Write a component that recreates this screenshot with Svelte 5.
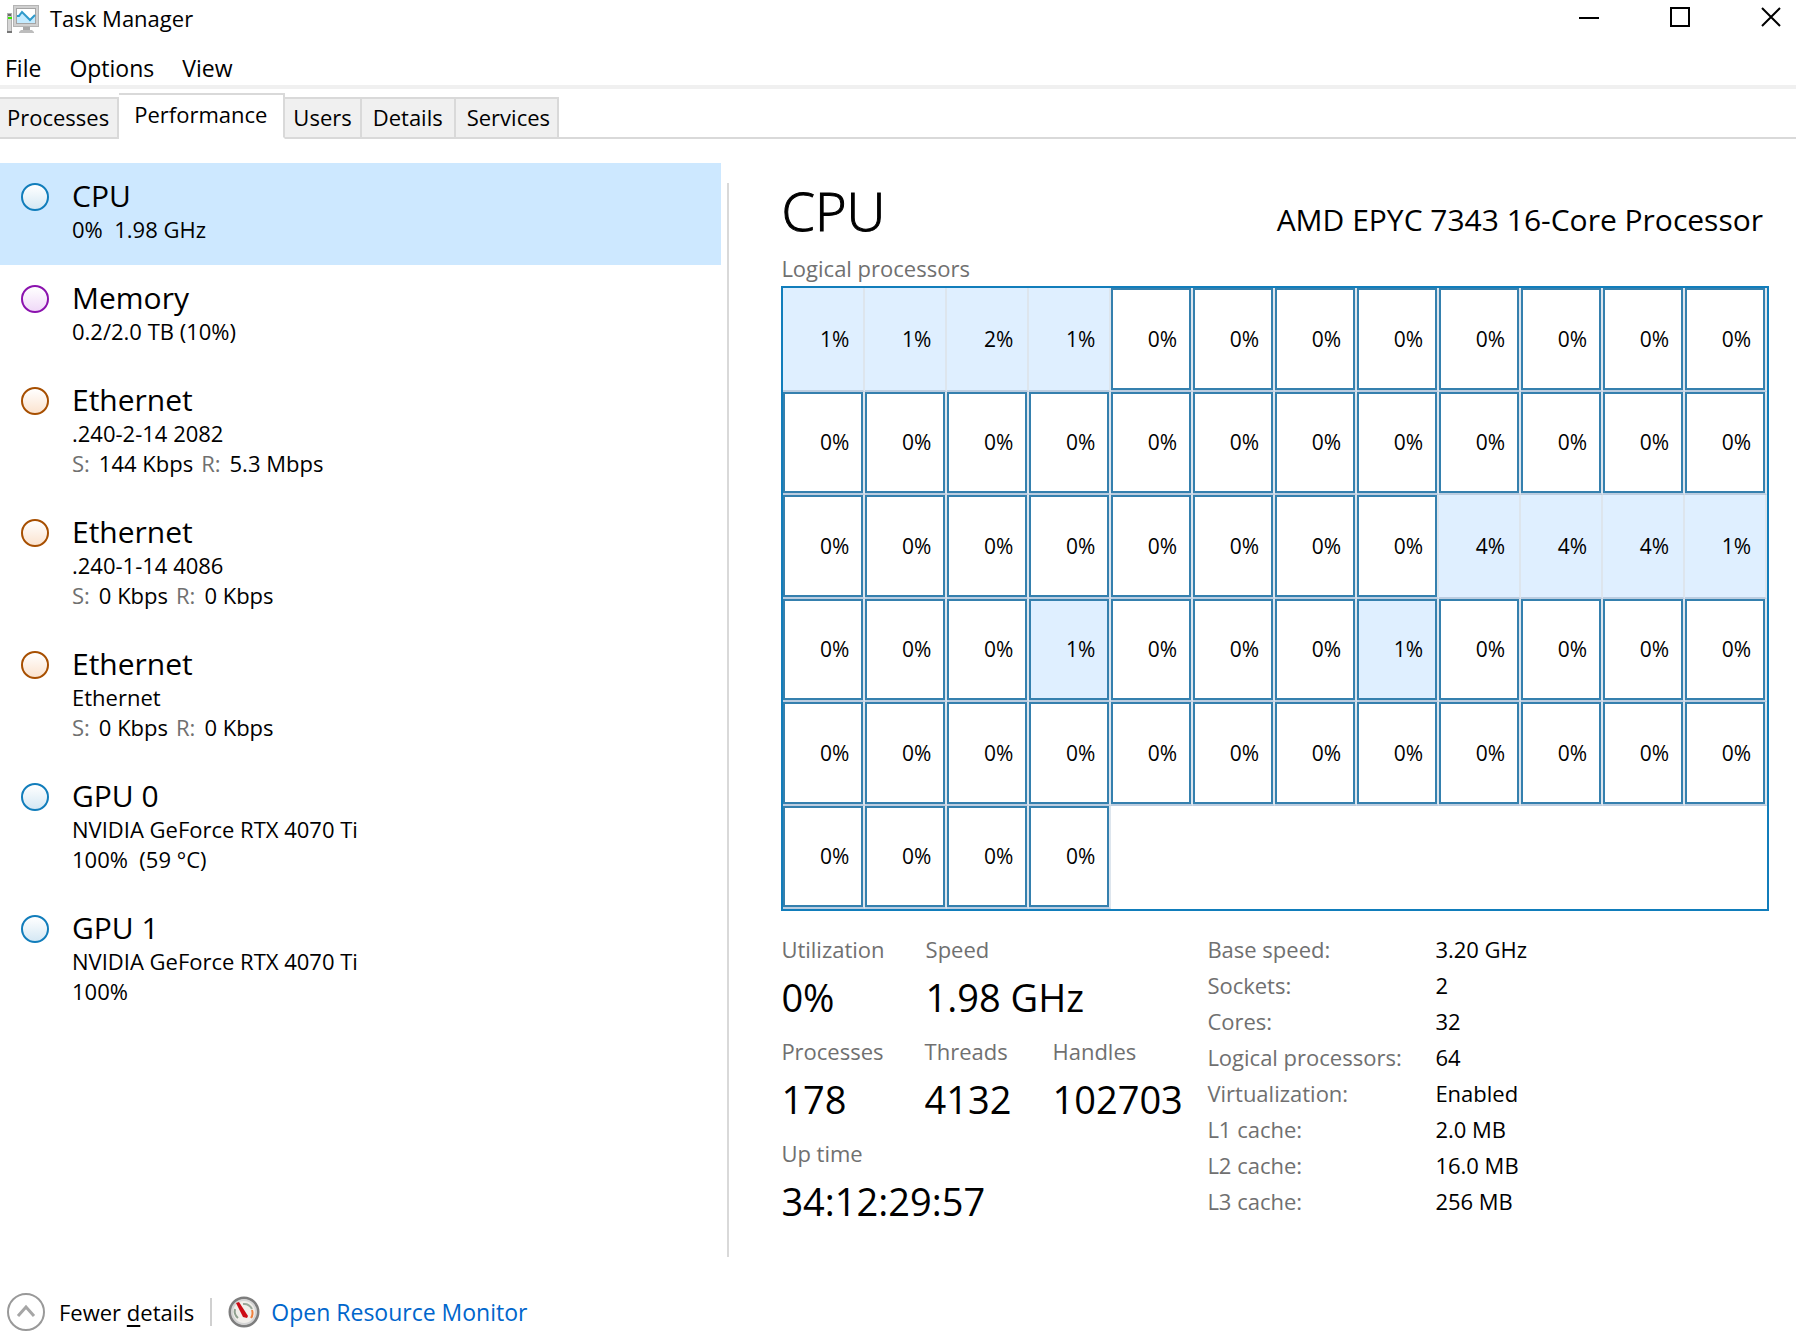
<script>
  const tabs = ['Processes', 'Performance', 'Users', 'Details', 'Services'];
  let activeTab = $state('Performance');
  let selected = $state(0);

  const devices = [
    { name: 'CPU', tone: 'blue', lines: ['0%  1.98 GHz'] },
    { name: 'Memory', tone: 'purple', lines: ['0.2/2.0 TB (10%)'] },
    { name: 'Ethernet', tone: 'orange', lines: ['.240-2-14 2082'], send: '144 Kbps', receive: '5.3 Mbps' },
    { name: 'Ethernet', tone: 'orange', lines: ['.240-1-14 4086'], send: '0 Kbps', receive: '0 Kbps' },
    { name: 'Ethernet', tone: 'orange', lines: ['Ethernet'], send: '0 Kbps', receive: '0 Kbps' },
    { name: 'GPU 0', tone: 'blue', lines: ['NVIDIA GeForce RTX 4070 Ti', '100%  (59 °C)'] },
    { name: 'GPU 1', tone: 'blue', lines: ['NVIDIA GeForce RTX 4070 Ti', '100%'] }
  ];

  // Load of each busy logical processor; all others are idle.
  const load = { 0: 1, 1: 1, 2: 2, 3: 1, 32: 4, 33: 4, 34: 4, 35: 1, 39: 1, 43: 1 };
  const framed = [39, 43];
  const cores = Array.from({ length: 64 }, (_, i) => ({
    value: load[i] ?? 0,
    busy: i in load,
    framed: !(i in load) || framed.includes(i)
  }));

  const stats = [
    [['Utilization', '0%'], ['Speed', '1.98 GHz']],
    [['Processes', '178'], ['Threads', '4132'], ['Handles', '102703']],
    [['Up time', '34:12:29:57']]
  ];

  const specs = [
    ['Base speed:', '3.20 GHz'],
    ['Sockets:', '2'],
    ['Cores:', '32'],
    ['Logical processors:', '64'],
    ['Virtualization:', 'Enabled'],
    ['L1 cache:', '2.0 MB'],
    ['L2 cache:', '16.0 MB'],
    ['L3 cache:', '256 MB']
  ];
</script>

<div class="window">
  <header class="titlebar">
    <svg class="app-icon" viewBox="0 0 32 32" aria-hidden="true">
      <rect x="0" y="10" width="5" height="20" fill="#b0b0b0" />
      <rect x="1" y="11" width="3" height="18" fill="#d6d6d6" />
      <rect x="1" y="11" width="3" height="2" fill="#6d6d6d" />
      <rect x="1" y="14" width="4" height="2" fill="#39e600" />
      <rect x="0" y="28" width="5" height="2" fill="#777" />
      <rect x="6" y="2" width="26" height="22" fill="#b4b4b4" />
      <rect x="7" y="3" width="24" height="20" fill="#d0d0d0" />
      <rect x="9" y="5" width="20" height="16" fill="#a4a4a4" />
      <rect x="10" y="6" width="18" height="14" fill="#fff" />
      <path d="M10 13l4-4 5 5 4 3 5-5v8H10z" fill="#c4ebff" />
      <path d="M10 13h2l3-4 4 4 4 4 3-3 2-2" fill="none" stroke="#2f9acb" stroke-width="2" />
      <rect x="16" y="24" width="7" height="3" fill="#a8a8a8" />
      <path d="M14 27h11l2 2v1H12v-1z" fill="#bdbdbd" />
    </svg>
    <h1>Task Manager</h1>
    <div class="controls">
      <button aria-label="Minimize"><svg viewBox="0 0 20 20"><path d="M0 11h20" /></svg></button>
      <button aria-label="Maximize"><svg viewBox="0 0 20 20"><path d="M1 1h18v18H1z" /></svg></button>
      <button aria-label="Close"><svg viewBox="0 0 20 20"><path d="M1 1l18 18M19 1L1 19" /></svg></button>
    </div>
  </header>

  <nav class="menu">
    <button>File</button>
    <button>Options</button>
    <button>View</button>
  </nav>

  <div class="tabs" role="tablist">
    {#each tabs as tab}
      <button role="tab" aria-selected={tab === activeTab} onclick={() => (activeTab = tab)}>{tab}</button>
    {/each}
    <span class="rest"></span>
  </div>

  <main>
    <aside>
      {#each devices as device, i}
        <button class="device" class:selected={i === selected} onclick={() => (selected = i)}>
          <span class="dot {device.tone}"></span>
          <span class="info">
            <span class="name">{device.name}</span>
            {#each device.lines as line}
              <span class="line">{line}</span>
            {/each}
            {#if device.send}
              <span class="line rates">
                <span><i>S:</i>{device.send}</span>
                <span><i>R:</i>{device.receive}</span>
              </span>
            {/if}
          </span>
        </button>
      {/each}
    </aside>

    <section class="detail">
      <div class="heading">
        <h2>CPU</h2>
        <p>AMD EPYC 7343 16-Core Processor</p>
      </div>
      <p class="caption">Logical processors</p>
      <div class="cores">
        {#each cores as core}
          <div class="cell">
            <div class="core" class:busy={core.busy} class:framed={core.framed}>{core.value}%</div>
          </div>
        {/each}
      </div>

      <div class="figures">
        <div class="stats">
          {#each stats as row}
            <dl>
              {#each row as [label, value]}
                <div>
                  <dt>{label}</dt>
                  <dd>{value}</dd>
                </div>
              {/each}
            </dl>
          {/each}
        </div>
        <table>
          <tbody>
            {#each specs as [label, value]}
              <tr><th scope="row">{label}</th><td>{value}</td></tr>
            {/each}
          </tbody>
        </table>
      </div>
    </section>
  </main>

  <footer>
    <button class="fewer">
      <svg viewBox="0 0 38 38" aria-hidden="true">
        <circle cx="19" cy="19" r="18" fill="none" stroke="#999" stroke-width="2" />
        <path d="M11 23l8-9 8 9" fill="none" stroke="#a6a6a6" stroke-width="3" />
      </svg>
      <span>Fewer <u>d</u>etails</span>
    </button>
    <span class="divider"></span>
    <a href="#resource-monitor">
      <svg viewBox="0 0 32 32" aria-hidden="true">
        <circle cx="16" cy="16" r="14" fill="#f1eeea" stroke="#7d7d7d" stroke-width="3" />
        <circle cx="16" cy="16" r="12" fill="none" stroke="#d4d4d4" stroke-width="2" />
        <path d="M10 22a9 9 0 0 1-3-9" fill="none" stroke="#8fa08f" stroke-width="2" />
        <path d="M15 8a9 9 0 0 1 9 5" fill="none" stroke="#9aa79a" stroke-width="2" />
        <path d="M24 14a9 9 0 0 1-1 8" fill="none" stroke="#f0803c" stroke-width="2" />
        <path d="M8 7l3-1 9 14-1 2-4-1z" fill="#cc0a14" />
      </svg>
      Open Resource Monitor
    </a>
  </footer>
</div>

<style>
  :global(body) {
    margin: 0;
    background: #fff;
  }

  .window {
    display: flex;
    flex-direction: column;
    min-height: 100vh;
    color: #000;
    font: 22px/30px 'Open Sans', 'Noto Sans', sans-serif;
  }

  button {
    margin: 0;
    padding: 0;
    border: 0;
    background: none;
    color: inherit;
    font: inherit;
    text-align: left;
  }

  h1, h2, p, dl, dd {
    margin: 0;
    font-weight: 400;
  }

  .titlebar {
    display: flex;
    align-items: flex-start;
    height: 50px;
    padding: 3px 0 0 7px;
    box-sizing: border-box;
  }

  .app-icon {
    width: 32px;
    height: 32px;
    margin-right: 11px;
  }

  h1 {
    font-size: 22px;
    line-height: 30px;
  }

  .controls {
    display: flex;
    gap: 41px;
    margin-left: auto;
  }

  .controls button {
    width: 50px;
    height: 28px;
    display: grid;
    place-items: center;
  }

  .controls svg {
    width: 20px;
    height: 20px;
    fill: none;
    stroke: #000;
    stroke-width: 2;
  }

  .menu {
    display: flex;
    gap: 28px;
    padding: 3px 5px 2px;
    border-bottom: 4px solid #f0f0f0;
    font-size: 23px;
  }

  .tabs {
    display: flex;
    align-items: flex-end;
    padding-top: 4px;
  }

  .tabs button {
    box-sizing: border-box;
    height: 42px;
    padding: 0 7px 2px 11px;
    border: 2px solid #d9d9d9;
    border-left: 0;
    background: #f0f0f0;
    line-height: 36px;
  }

  .tabs button:first-child {
    padding: 0 8px 2px 7px;
  }

  .tabs button[aria-selected='true'] {
    height: 46px;
    padding: 0 16px 4px 15px;
    border-bottom-color: #fff;
    background: #fff;
  }

  .tabs button:nth-child(3) {
    padding: 0 8px 2px;
  }

  .tabs button:nth-child(4) {
    padding: 0 11px 2px;
  }

  .rest {
    flex: 1;
    border-bottom: 2px solid #d9d9d9;
  }

  main {
    flex: 1;
    display: grid;
    grid-template-columns: 81fr 119fr;
    padding-top: 24px;
  }

  aside {
    padding-right: 6px;
  }

  .device {
    display: flex;
    gap: 23px;
    width: 100%;
    padding: 14px 0 21px 21px;
  }

  .device.selected {
    background: #cde8ff;
  }

  .dot {
    flex: none;
    box-sizing: border-box;
    width: 28px;
    height: 28px;
    margin-top: 6px;
    border: 2px solid;
    border-radius: 50%;
  }

  .blue {
    border-color: #117dbb;
    background: linear-gradient(#fff, #d5e8f4);
  }

  .purple {
    border-color: #8b12ae;
    background: linear-gradient(#fff, #f0d9f8);
  }

  .orange {
    border-color: #a74f01;
    background: linear-gradient(#fff, #fbe3cf);
  }

  .name,
  .line {
    display: block;
    white-space: pre;
  }

  .name {
    font-size: 30px;
    line-height: 37px;
  }

  .line.rates {
    display: flex;
    gap: 8px;
  }

  .rates i {
    margin-right: 9px;
    color: #707070;
    font-style: normal;
  }

  .detail {
    display: flex;
    flex-direction: column;
    margin-top: 20px;
    padding: 0 27px 20px 52px;
    border-left: 2px solid #d9d9d9;
  }

  .heading {
    display: flex;
    align-items: baseline;
    justify-content: space-between;
    padding-right: 6px;
  }

  h2 {
    font-size: 54px;
    font-weight: 300;
    line-height: 54px;
    -webkit-text-stroke: 1px #000;
  }

  .heading p {
    font-size: 30px;
    line-height: 40px;
  }

  .caption {
    padding: 12px 0 2px;
    color: #707070;
    font-size: 22px;
    line-height: 32px;
  }

  .cores {
    flex: 1;
    display: grid;
    grid-template-columns: repeat(12, 1fr);
    grid-template-rows: repeat(6, 1fr);
    border: 2px solid #117dbb;
  }

  .cell {
    display: grid;
    border-right: 2px solid #dde5ed;
    border-bottom: 2px solid #bccde0;
  }

  .core {
    display: flex;
    align-items: center;
    justify-content: flex-end;
    padding-right: 14px;
    font-size: 21px;
  }

  .framed {
    padding-right: 12px;
    border: 2px solid #3580ae;
  }

  .busy {
    background: #dfefff;
  }

  .figures {
    display: flex;
    padding-top: 20px;
  }

  .stats {
    width: 426px;
  }

  dl {
    display: flex;
    gap: 41px;
    height: 102px;
  }

  dt,
  th {
    color: #707070;
    font-weight: 400;
    line-height: 36px;
    text-align: left;
  }

  dd {
    font-size: 38px;
    line-height: 60px;
  }

  table {
    border-collapse: collapse;
    align-self: flex-start;
  }

  th,
  td {
    padding: 0;
    line-height: 36px;
  }

  th {
    width: 228px;
  }

  footer {
    display: flex;
    align-items: center;
    padding: 36px 7px 13px;
  }

  .fewer,
  footer a {
    display: flex;
    align-items: center;
  }

  .fewer {
    gap: 14px;
  }

  .fewer svg {
    width: 38px;
    height: 38px;
  }

  u {
    text-underline-offset: 4px;
  }

  .divider {
    width: 2px;
    height: 28px;
    margin: 0 16px;
    background: #d0d0d0;
  }

  footer a {
    gap: 11px;
    color: #0066cc;
    font-size: 23px;
    text-decoration: none;
  }

  footer a svg {
    width: 32px;
    height: 32px;
  }
</style>
